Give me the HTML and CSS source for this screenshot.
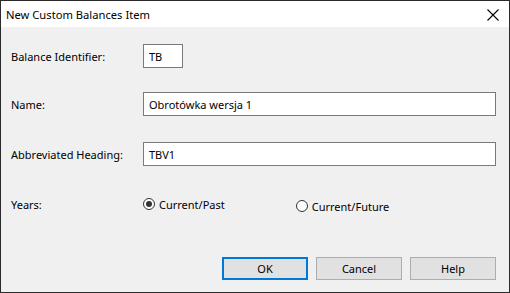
FILE: index.html
```html
<!DOCTYPE html>
<html>
<head>
<meta charset="utf-8">
<link rel="stylesheet" href="styles.css">
</head>
<body>
<div class="window">
  <div class="titlebar">
    <span class="title">New Custom Balances Item</span>
    <svg class="close" width="12" height="12" viewBox="0 0 12 12"><path d="M0.5 0.5 L11.5 11.5 M11.5 0.5 L0.5 11.5" stroke="#000" stroke-width="1.1" fill="none"/></svg>
  </div>
  <div class="content">
    <div class="row row1">
      <span class="label">Balance Identifier:</span>
      <div class="input short">TB</div>
    </div>
    <div class="row row2">
      <span class="label">Name:</span>
      <div class="input wide">Obrotówka wersja 1</div>
    </div>
    <div class="row row3">
      <span class="label">Abbreviated Heading:</span>
      <div class="input wide">TBV1</div>
    </div>
    <div class="row row4">
      <span class="label">Years:</span>
      <div class="radio checked"><span class="circle"></span><span>Current/Past</span></div>
      <div class="radio second"><span class="circle"></span><span>Current/Future</span></div>
    </div>
    <div class="buttons">
      <div class="btn default">OK</div>
      <div class="btn">Cancel</div>
      <div class="btn">Help</div>
    </div>
  </div>
</div>
</body>
</html>
```
FILE: styles.css
```css
html, body {
  margin: 0;
  padding: 0;
  background: #f0f0f0;
}
body {
  font-family: "Noto Sans", "Open Sans", sans-serif;
  font-size: 11px;
  color: #000;
}
.window {
  width: 510px;
  height: 293px;
  box-sizing: border-box;
  border: 1px solid #2b2b2b;
  background: #f0f0f0;
  display: flex;
  flex-direction: column;
}
.titlebar {
  height: 26px;
  background: #fff;
  display: flex;
  align-items: center;
  justify-content: space-between;
  padding: 0 10px 0 5px;
  flex: none;
}
.title {
  font-size: 11.2px;
  margin-top: 1px;
}
.close {
  display: block;
  margin-top: 1px;
}
.content {
  flex: 1;
  display: flex;
  flex-direction: column;
  padding: 17px 13px 0 10px;
}
.row {
  display: flex;
  align-items: center;
  height: 24px;
}
.label {
  width: 132px;
  flex: none;
}
.row2 { margin-top: 24px; }
.row3 { margin-top: 26px; }
.row4 { margin-top: 26px; height: 24px; }
.input {
  box-sizing: border-box;
  height: 24px;
  border: 1px solid #7a7a7a;
  background: #fff;
  padding: 0 5px;
  display: flex;
  align-items: center;
}
.short { width: 40px; }
.wide { width: 353px; }
.radio {
  display: flex;
  align-items: center;
  gap: 4px;
}
.radio.second {
  margin-left: 71px;
  margin-top: 4px;
}
.circle {
  box-sizing: border-box;
  width: 12px;
  height: 12px;
  border: 1px solid #333;
  border-radius: 50%;
  background: #fff;
  display: flex;
  align-items: center;
  justify-content: center;
}
.checked .circle::after {
  content: "";
  width: 6px;
  height: 6px;
  border-radius: 50%;
  background: #333;
}
.buttons {
  display: flex;
  justify-content: flex-end;
  gap: 8px;
  margin-top: 41px;
}
.btn {
  box-sizing: border-box;
  width: 86px;
  height: 23px;
  border: 1px solid #adadad;
  background: #e1e1e1;
  display: flex;
  align-items: center;
  justify-content: center;
}
.btn.default {
  border: 2px solid #0078d7;
}
```
